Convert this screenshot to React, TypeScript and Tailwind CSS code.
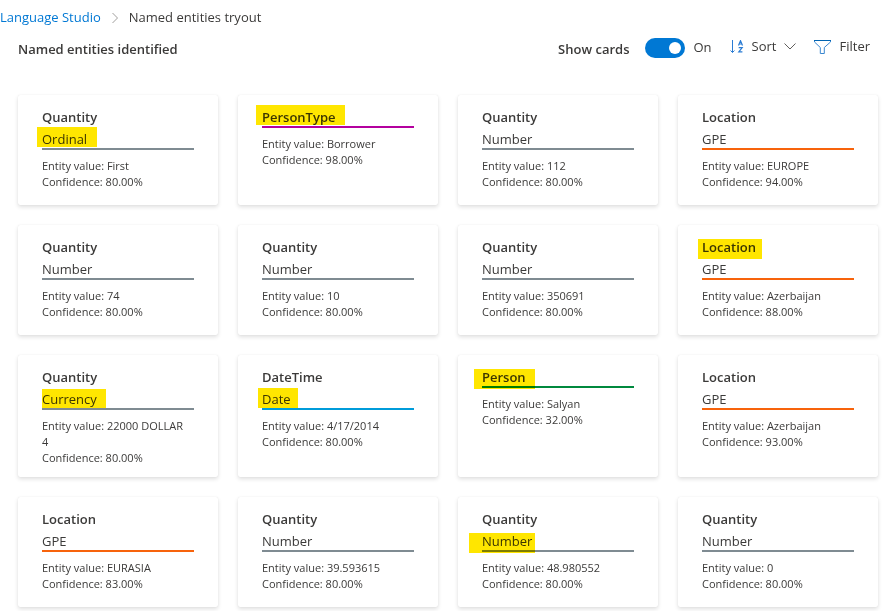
import { useState } from "react";

type Entity = {
  category: string;
  subcategory?: string;
  value: string;
  confidence: string;
  rule: string;
  marker?: string;
};

const GREY = "border-[#7f8b92]";
const ORANGE = "border-[#f7630c]";

const entities: Entity[] = [
  { category: "Quantity", subcategory: "Ordinal", value: "First", confidence: "80.00%", rule: GREY, marker: "left-[19px] top-8 w-[60px] h-5" },
  { category: "PersonType", value: "Borrower", confidence: "98.00%", rule: "border-[#b4009e]", marker: "left-[18px] top-[10px] w-[89px] h-5" },
  { category: "Quantity", subcategory: "Number", value: "112", confidence: "80.00%", rule: GREY },
  { category: "Location", subcategory: "GPE", value: "EUROPE", confidence: "94.00%", rule: ORANGE },
  { category: "Quantity", subcategory: "Number", value: "74", confidence: "80.00%", rule: GREY },
  { category: "Quantity", subcategory: "Number", value: "10", confidence: "80.00%", rule: GREY },
  { category: "Quantity", subcategory: "Number", value: "350691", confidence: "80.00%", rule: GREY },
  { category: "Location", subcategory: "GPE", value: "Azerbaijan", confidence: "88.00%", rule: ORANGE, marker: "left-5 top-[14px] w-16 h-5" },
  { category: "Quantity", subcategory: "Currency", value: "22000 DOLLAR 4", confidence: "80.00%", rule: GREY, marker: "left-6 top-[34px] w-16 h-[19px]" },
  { category: "DateTime", subcategory: "Date", value: "4/17/2014", confidence: "80.00%", rule: "border-[#009cda]", marker: "left-5 top-[33px] w-10 h-5" },
  { category: "Person", value: "Salyan", confidence: "32.00%", rule: "border-[#00893e]", marker: "left-4 top-[14px] w-[61px] h-5" },
  { category: "Location", subcategory: "GPE", value: "Azerbaijan", confidence: "93.00%", rule: ORANGE },
  { category: "Location", subcategory: "GPE", value: "EURASIA", confidence: "83.00%", rule: ORANGE },
  { category: "Quantity", subcategory: "Number", value: "39.593615", confidence: "80.00%", rule: GREY },
  { category: "Quantity", subcategory: "Number", value: "48.980552", confidence: "80.00%", rule: GREY, marker: "left-[11px] top-9 w-[66px] h-5" },
  { category: "Quantity", subcategory: "Number", value: "0", confidence: "80.00%", rule: GREY },
];

function EntityCard({ entity }: { entity: Entity }) {
  return (
    <li className="relative min-h-[110px] rounded-xs bg-white px-6 pt-[13px] pb-[11px] shadow-[0_2px_4px_rgba(0,0,0,0.13),0_0_1px_rgba(0,0,0,0.11)]">
      <div className={`flex flex-col gap-1 border-b-2 text-[13px] leading-[18px] ${entity.rule}`}>
        <h2 className="font-semibold">{entity.category}</h2>
        {entity.subcategory && <p>{entity.subcategory}</p>}
      </div>
      <div className="mt-2 pr-1 text-[11px] leading-4">
        <p>{`Entity value: ${entity.value}`}</p>
        <p>{`Confidence: ${entity.confidence}`}</p>
      </div>
      {entity.marker && (
        <span aria-hidden="true" className={`pointer-events-none absolute bg-[#ffe600] mix-blend-multiply ${entity.marker}`} />
      )}
    </li>
  );
}

function SortIcon() {
  return (
    <svg width="14" height="14" viewBox="0 0 14 14" fill="none" stroke="#2b7cd3" aria-hidden="true">
      <path d="M2.5 0v12.5M.5 10.5l2 2 2-2" />
      <path d="M8.500 5.500 10.500.7l2 4.800M9.200 4h2.600" strokeWidth="1.2" />
      <path d="M8.700 7.600h3.500l-3.400 4.300h3.600" strokeWidth="1.2" />
    </svg>
  );
}

function FilterIcon() {
  return (
    <svg width="17" height="14" viewBox="0 0 17 14" fill="none" stroke="#3a87d0" aria-hidden="true">
      <path d="M.5.5V2l5.800 5.500v6h4v-6L16.500 2V.5" />
      <path d="M0 .5h17" stroke="#0063b1" />
    </svg>
  );
}

export default function App() {
  const [showCards, setShowCards] = useState(true);

  return (
    <div className="bg-white font-['Open_Sans',sans-serif] text-[13px] text-[#3b3a39]">
      <nav aria-label="Breadcrumb" className="flex h-8 items-center pt-[3px]">
        <a href="#" className="text-[#0078d4]">Language Studio</a>
        <svg width="8" height="12" viewBox="0 0 8 12" fill="none" stroke="#a19f9d" className="mx-[10px]" aria-hidden="true">
          <path d="m1.500 1 5 5-5 5" />
        </svg>
        <span aria-current="page">Named entities tryout</span>
      </nav>

      <main className="pr-[6px] pb-1 pl-[18px]">
        <header className="flex h-8 items-center pr-2">
          <h1 className="mr-auto pt-[3px] font-semibold">Named entities identified</h1>
          <label htmlFor="show-cards" className="mr-4 pt-[3px] font-semibold">Show cards</label>
          <input
            id="show-cards"
            type="checkbox"
            role="switch"
            checked={showCards}
            onChange={(e) => setShowCards(e.target.checked)}
            className="flex h-5 w-10 appearance-none items-center rounded-full bg-[#8a8886] px-1 before:size-3 before:rounded-full before:bg-white checked:justify-end checked:bg-[#0078d4]"
          />
          <span className="ml-2">{showCards ? "On" : "Off"}</span>
          <button type="button" className="ml-[18px] flex items-center gap-2 pb-[3px]">
            <SortIcon />
            Sort
            <svg width="12" height="7" viewBox="0 0 12 7" fill="none" stroke="#605e5c" aria-hidden="true">
              <path d="m.5.5 5.500 5.500 5.500-5.500" />
            </svg>
          </button>
          <button type="button" className="ml-[18px] flex items-center gap-2 pb-[3px]">
            <FilterIcon />
            Filter
          </button>
        </header>

        {showCards && (
          <ul className="mt-[31px] grid grid-cols-4 gap-5">
            {entities.map((entity, i) => (
              <EntityCard key={i} entity={entity} />
            ))}
          </ul>
        )}
      </main>
    </div>
  );
}
